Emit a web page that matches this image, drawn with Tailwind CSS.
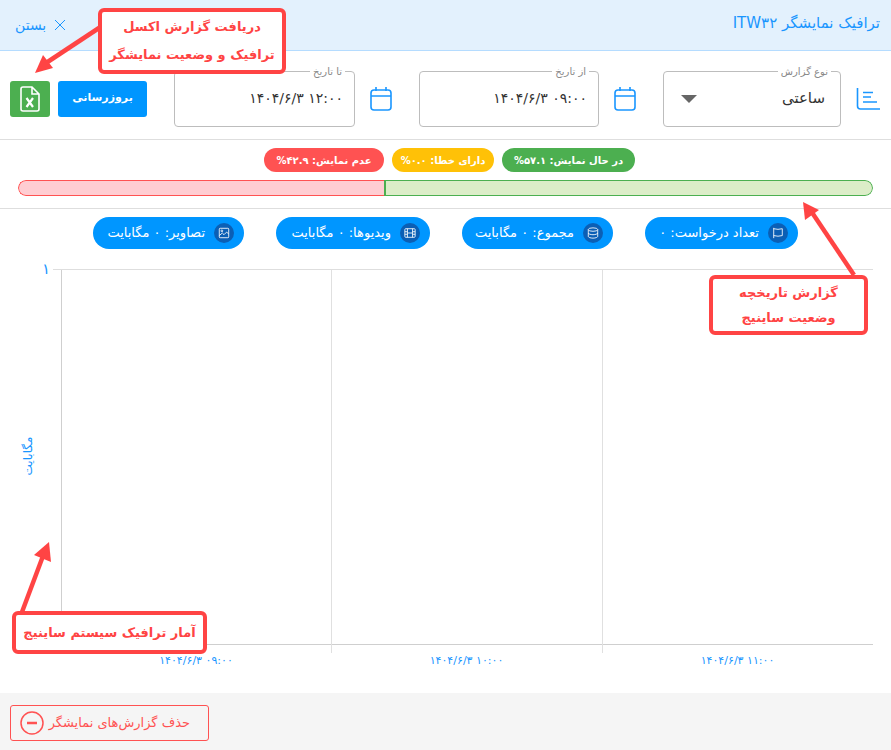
<!DOCTYPE html>
<html lang="fa" dir="rtl">
<head>
  <meta charset="UTF-8">
  <title>ترافیک نمایشگر</title>
  <script src="https://cdn.jsdelivr.net/npm/@tailwindcss/browser@4"></script>
</head>
<body class="bg-white">
  <div class="relative w-[891px] h-[750px] overflow-hidden font-['DejaVu_Sans',sans-serif] text-[#333]">

    <!-- header -->
    <div class="flex items-center justify-between h-[51px] px-[11px] bg-[#e3f1fd] border-b border-[#b5dcff] text-[#1a96ff]">
      <div class="text-[15px] -mt-[4px]">ترافیک نمایشگر <span dir="ltr">ITW۳۲</span></div>
      <div class="flex items-center gap-[8px] pl-[4px] text-[14px]">
        <svg class="w-[12px] h-[12px]" viewBox="0 0 12 12" fill="none" stroke="currentColor"><path d="M1 1l10 10M11 1L1 11"/></svg>
        <span>بستن</span>
      </div>
    </div>

    <!-- filters -->
    <div class="flex items-center h-[89px] pt-[7px] pr-[11px] pl-[10px] border-b border-[#dedede]">
      <svg class="w-[24px] h-[24px] text-[#1a96ff]" viewBox="0 0 24 24" fill="none" stroke="currentColor" stroke-width="1.600"><path d="M1.500 1v18q0 3 3 3H24M7 5.500h10M7 10h8M7 15h14"/></svg>
      <div class="relative flex items-center justify-between w-[178px] h-[56px] mr-[15px] pr-[15px] pl-[17px] border border-[#bdbdbd] rounded-[4px]">
        <span class="absolute -top-[8px] right-[9px] px-[3px] bg-white text-[10px] text-[#888]">نوع گزارش</span>
        <span class="text-[15px]">ساعتی</span>
        <span class="w-0 h-0 border-x-[8px] border-x-transparent border-t-[8px] border-t-[#666]"></span>
      </div>
      <svg class="w-[24px] h-[26px] mr-[26px] text-[#1a96ff]" viewBox="0 0 24 26" fill="none" stroke="currentColor" stroke-width="1.600"><rect x="2" y="4" width="20" height="20" rx="3"/><path d="M2 10h20M7 1v4M17 1v4"/></svg>
      <div class="relative flex items-center w-[180px] h-[56px] mr-[14px] pr-[11px] border border-[#bdbdbd] rounded-[4px]">
        <span class="absolute -top-[8px] right-[9px] px-[3px] bg-white text-[10px] text-[#888]">از تاریخ</span>
        <span dir="ltr" class="text-[14px]">۱۴۰۴/۶/۳ ۰۹:۰۰</span>
      </div>
      <svg class="w-[24px] h-[26px] mr-[26px] text-[#1a96ff]" viewBox="0 0 24 26" fill="none" stroke="currentColor" stroke-width="1.600"><rect x="2" y="4" width="20" height="20" rx="3"/><path d="M2 10h20M7 1v4M17 1v4"/></svg>
      <div class="relative flex items-center w-[181px] h-[56px] mr-[14px] pr-[11px] border border-[#bdbdbd] rounded-[4px]">
        <span class="absolute -top-[8px] right-[9px] px-[3px] bg-white text-[10px] text-[#888]">تا تاریخ</span>
        <span dir="ltr" class="text-[14px]">۱۴۰۴/۶/۳ ۱۲:۰۰</span>
      </div>
      <div class="flex items-center justify-center w-[89px] h-[36px] mr-[27px] bg-[#0096ff] rounded-[3px] text-white text-[11px] font-bold">بروزرسانی</div>
      <div class="flex items-center justify-center w-[40px] h-[36px] mr-[8px] bg-[#4caf50] rounded-[3px]">
        <svg class="w-[20px] h-[26px]" viewBox="0 0 20 26" fill="none" stroke="#fff" stroke-width="1.600"><path d="M3 1h9l7 7v15q0 2-2 2H3q-2 0-2-2V3q0-2 2-2zM12 1v7h7"/><path stroke-width="2.200" d="M6.500 12l6.500 9M13 12l-6.500 9"/></svg>
      </div>
    </div>

    <!-- status -->
    <div class="h-[69px] border-b border-[#dedede]">
      <div class="flex justify-center gap-[8px] pt-[8px] pl-[8px]">
        <span class="flex items-center justify-center w-[133px] h-[24px] rounded-full bg-[#4caf50] text-white text-[10px] font-bold">در حال نمایش: ۵۷.۱%</span>
        <span class="flex items-center justify-center w-[102px] h-[24px] rounded-full bg-[#ffc107] text-white text-[10px] font-bold">دارای خطا: ۰.۰%</span>
        <span class="flex items-center justify-center w-[120px] h-[24px] rounded-full bg-[#ff5252] text-white text-[10px] font-bold">عدم نمایش: ۴۲.۹%</span>
      </div>
      <div class="flex h-[16px] mt-[8px] mx-[18px] rounded-full overflow-hidden">
        <div class="w-[57.2%] bg-[#dcedc8] border border-[#4caf50] border-l-2 rounded-r-full"></div>
        <div class="flex-1 bg-[#ffcdd2] border border-r-0 border-[#ff5252] rounded-l-full"></div>
      </div>
    </div>

    <!-- totals -->
    <div class="flex justify-center gap-[32px] pt-[8px]">
      <div class="flex items-center gap-[9px] w-[153px] h-[32px] pr-[10px] rounded-full bg-[#0096ff] text-white text-[13px]">
        <span class="flex items-center justify-center w-[20px] h-[20px] rounded-full bg-[#0b5fb5]">
          <svg class="w-[12px] h-[12px]" viewBox="0 0 14 14" fill="none" stroke="#fff"><path d="M2 1v12M2 2q5 1.500 10 0v8q-5 1.500-10 0"/></svg>
        </span>
        <span>تعداد درخواست: ۰</span>
      </div>
      <div class="flex items-center gap-[9px] w-[151px] h-[32px] pr-[10px] rounded-full bg-[#0096ff] text-white text-[13px]">
        <span class="flex items-center justify-center w-[20px] h-[20px] rounded-full bg-[#0b5fb5]">
          <svg class="w-[12px] h-[12px]" viewBox="0 0 14 14" fill="none" stroke="#fff"><ellipse cx="7" cy="3" rx="5.500" ry="2"/><path d="M1.500 3v8c0 1 2.500 2 5.500 2s5.500-1 5.500-2V3M1.500 7c0 1 2.500 2 5.500 2s5.500-1 5.500-2"/></svg>
        </span>
        <span>مجموع: ۰ مگابایت</span>
      </div>
      <div class="flex items-center gap-[9px] w-[154px] h-[32px] pr-[10px] rounded-full bg-[#0096ff] text-white text-[13px]">
        <span class="flex items-center justify-center w-[20px] h-[20px] rounded-full bg-[#0b5fb5]">
          <svg class="w-[12px] h-[12px]" viewBox="0 0 14 14" fill="none" stroke="#fff"><rect x="1" y="2" width="12" height="10" rx="1"/><path d="M4 2v10M10 2v10M1 5.500h3M1 8.500h3M10 5.500h3M10 8.500h3M4 7h6"/></svg>
        </span>
        <span>ویدیوها: ۰ مگابایت</span>
      </div>
      <div class="flex items-center gap-[9px] w-[151px] h-[32px] pr-[10px] rounded-full bg-[#0096ff] text-white text-[13px]">
        <span class="flex items-center justify-center w-[20px] h-[20px] rounded-full bg-[#0b5fb5]">
          <svg class="w-[12px] h-[12px]" viewBox="0 0 14 14" fill="none" stroke="#fff"><rect x="1.500" y="1.500" width="11" height="11" rx="1"/><path d="M1.500 10l3.500-3 2 2 3-3 2.500 2"/><circle cx="4.500" cy="4.500" r="1"/></svg>
        </span>
        <span>تصاویر: ۰ مگابایت</span>
      </div>
    </div>

    <!-- chart -->
    <div dir="ltr" class="flex h-[424px] mt-[20px]">
      <div class="relative w-[61px] shrink-0">
        <span class="absolute left-[42px] -top-[11px] text-[15px] text-[#1a96ff]">۱</span>
        <span class="absolute top-0 right-0 w-[8px] border-t border-[#dedede]"></span>
        <span class="absolute left-[-2px] top-[178px] w-[60px] text-center -rotate-90 text-[12px] text-[#1a96ff]">مگابایت</span>
      </div>
      <div class="w-[812px]">
        <div class="grid grid-cols-[270px_271px_271px] h-[384px] border-t border-[#dedede]">
          <div class="border-l border-[#cfcfcf]"></div>
          <div class="border-l border-[#e0e0e0]"></div>
          <div class="border-l border-[#e0e0e0]"></div>
        </div>
        <div class="-mt-[9px] border-t border-[#cfcfcf] grid grid-cols-[270px_271px_271px] text-center text-[11px] leading-[14px] text-[#1a96ff]">
          <div class="pt-[9px]">۱۴۰۴/۶/۳ ۰۹:۰۰</div>
          <div class="pt-[9px]">۱۴۰۴/۶/۳ ۱۰:۰۰</div>
          <div class="pt-[9px]">۱۴۰۴/۶/۳ ۱۱:۰۰</div>
        </div>
      </div>
    </div>

    <!-- footer -->
    <div class="flex items-start justify-end h-[57px] pt-[12px] pl-[10px] bg-[#f5f5f5]">
      <div class="flex items-center justify-between w-[199px] h-[36px] pr-[18px] pl-[9px] border border-[#ff5252] rounded-[3px] text-[#ff5252] text-[13px]">
        <span>حذف گزارش‌های نمایشگر</span>
        <svg class="w-[24px] h-[24px]" viewBox="0 0 24 24" fill="none" stroke="#ff5252"><circle cx="12" cy="12" r="11" stroke-width="1.500"/><path d="M7 12h10" stroke-width="2.500"/></svg>
      </div>
    </div>

    <!-- annotations on top of the screenshot -->
    <svg class="absolute inset-0 w-[891px] h-[750px] pointer-events-none" viewBox="0 0 891 750" fill="#ff4444" stroke="#ff4444">
      <path d="M102 26L46 63" stroke-width="4.500"/><path d="M35 73L43 55L53 68z" stroke="none"/>
      <path d="M854 275L811 211" stroke-width="4.500"/><path d="M803 202L819 210L805 220z" stroke="none"/>
      <path d="M22 612L43 556" stroke-width="4.500"/><path d="M49 542L34 555L51 562z" stroke="none"/>
    </svg>
    <div class="absolute left-[98px] top-[8px] flex flex-col items-center justify-center gap-[2px] w-[188px] h-[66px] bg-white border-4 border-[#ff4444] rounded-[6px] text-[#ff4444] text-[13px] font-bold leading-[26px]">
      <span>دریافت گزارش اکسل</span>
      <span>ترافیک و وضعیت نمایشگر</span>
    </div>
    <div class="absolute left-[709px] top-[275px] flex flex-col items-center justify-center w-[159px] h-[60px] bg-white border-4 border-[#ff4444] rounded-[6px] text-[#ff4444] text-[13px] font-bold leading-[25px]">
      <span>گزارش تاریخچه</span>
      <span>وضعیت ساینیج</span>
    </div>
    <div class="absolute left-[12px] top-[611px] flex items-center justify-center w-[195px] h-[43px] bg-white border-4 border-[#ff4444] rounded-[6px] text-[#ff4444] text-[13px] font-bold">
      آمار ترافیک سیستم ساینیج
    </div>
  </div>
</body>
</html>
